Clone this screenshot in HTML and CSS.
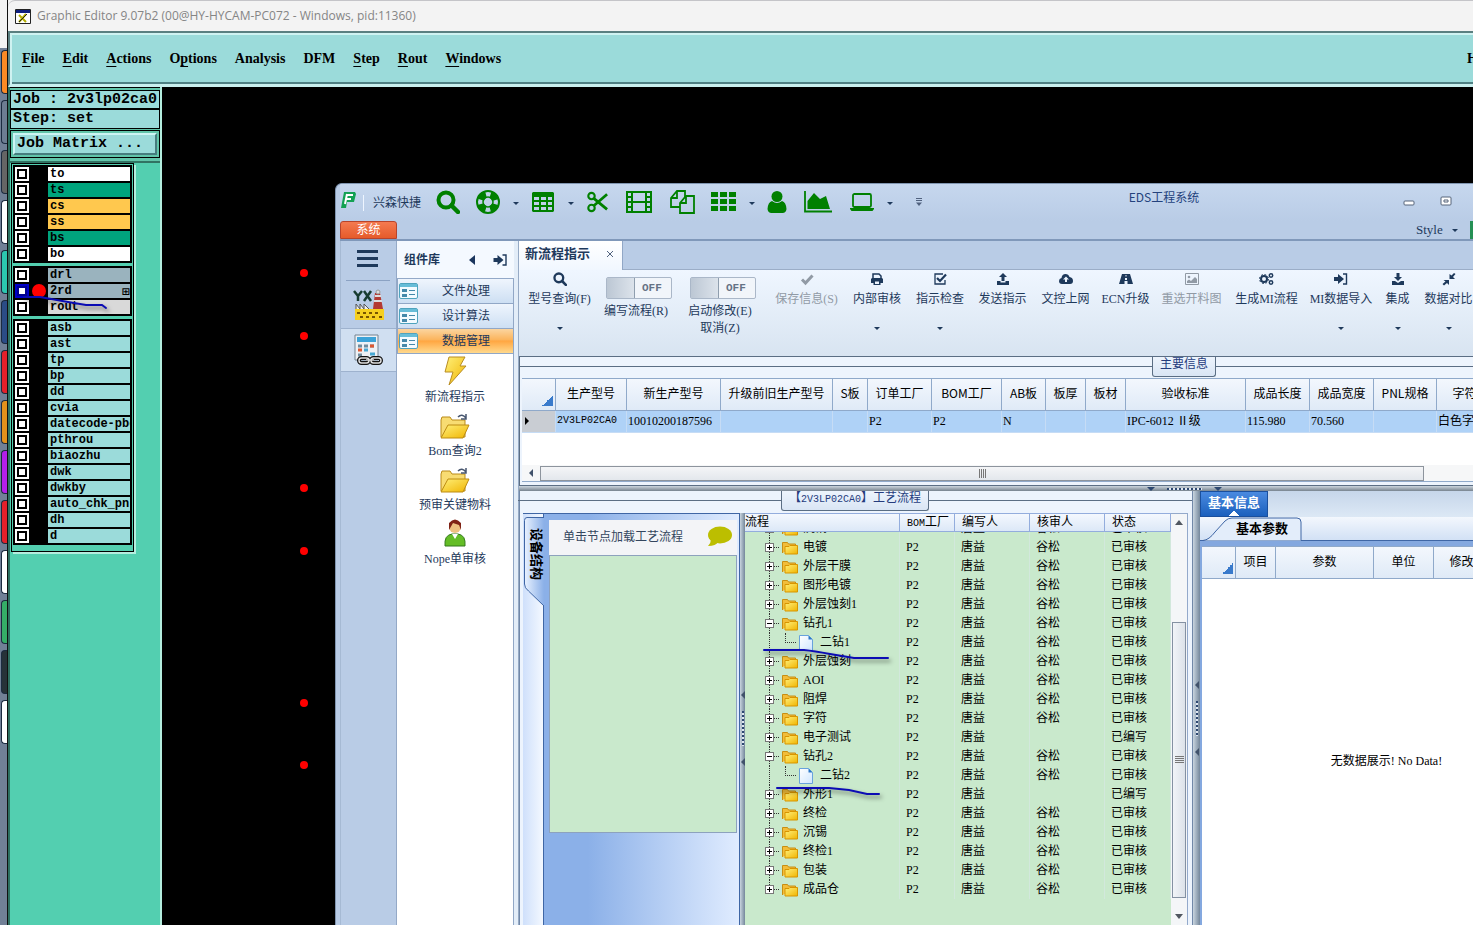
FILE: index.html
```html
<!DOCTYPE html>
<html lang="zh-CN">
<head>
   <meta charset="UTF-8">
   <meta name="viewport" content="width=device-width, initial-scale=1.0">
   <title>Graphic Editor</title>
   <link rel="stylesheet" href="styles.css">
</head>
<body>
   <!-- shared icons -->
   <svg class="defs" aria-hidden="true">
      <defs>
         <linearGradient id="gold" x1="0" y1="0" x2="1" y2="1"><stop offset="0" stop-color="#fff07a"/><stop offset="1" stop-color="#f0b400"/></linearGradient>
         <linearGradient id="page" x1="0" y1="0" x2="1" y2="1"><stop offset="0" stop-color="#fff"/><stop offset="1" stop-color="#cfe6ff"/></linearGradient>
         <linearGradient id="sidetab" x1="0" y1="0" x2="1" y2="0"><stop offset="0" stop-color="#e9f2ff"/><stop offset="1" stop-color="#8bb0e8"/></linearGradient>
      </defs>
      <symbol id="i-search" viewBox="0 0 24 24"><circle cx="10" cy="10" r="7.5" fill="none" stroke="currentColor" stroke-width="4"/><path d="M15.500 15.500L22 22" stroke="currentColor" stroke-width="4.500" stroke-linecap="round"/></symbol>
      <symbol id="i-ring" viewBox="0 0 24 24"><circle cx="12" cy="12" r="7.800" fill="none" stroke="currentColor" stroke-width="7" stroke-dasharray="7.600 4.650" stroke-dashoffset="-2.300"/><circle cx="12" cy="12" r="11" fill="none" stroke="currentColor" stroke-width="2"/><circle cx="12" cy="12" r="5" fill="none" stroke="currentColor" stroke-width="1.500"/></symbol>
      <symbol id="i-table" viewBox="0 0 24 24"><path fill="currentColor" fill-rule="evenodd" d="M2 2h20l1 1v18l-1 1H2l-1-1V3zM3 7v3h5V7zM10 7v3h5V7zM17 7v3h4V7zM3 12v3h5v-3zM10 12v3h5v-3zM17 12v3h4v-3zM3 17v3h5v-3zM10 17v3h5v-3zM17 17v3h4v-3z"/></symbol>
      <symbol id="i-cut" viewBox="0 0 24 24"><g fill="none" stroke="currentColor" stroke-width="2.300"><circle cx="6" cy="5.500" r="3.500"/><circle cx="6" cy="18.500" r="3.500"/><path d="M8.500 8L23 20M8.500 16L23 3.500" stroke-width="3"/></g></symbol>
      <symbol id="i-film" viewBox="0 0 26 24"><path fill="currentColor" fill-rule="evenodd" d="M0 1h26v22H0zM2 3v3h3V3zM2 8v3h3V8zM2 13v3h3v-3zM2 18v3h3v-3zM21 3v3h3V3zM21 8v3h3V8zM21 13v3h3v-3zM21 18v3h3v-3zM7 3v8h12V3zM7 13v8h12v-8z"/></symbol>
      <symbol id="i-copy" viewBox="0 0 25 24"><g fill="none" stroke="currentColor" stroke-width="1.800"><path d="M10 17H1V8l6-7h8v6M7 1v7H1"/><path d="M10 23V13l6-7h8v17zM16 6v7h-6"/></g></symbol>
      <symbol id="i-grid" viewBox="0 0 25 20"><path fill="currentColor" d="M0 0h7v5H0zM9 0h7v5H9zM18 0h7v5h-7zM0 7h7v5H0zM9 7h7v5H9zM18 7h7v5h-7zM0 14h7v5H0zM9 14h7v5H9zM18 14h7v5h-7z"/></symbol>
      <symbol id="i-user" viewBox="0 0 20 22"><circle cx="10" cy="5.500" r="5.500" fill="currentColor"/><path fill="currentColor" d="M5 10q5 4 10 0 4 1 4.500 8-.5 4-4 4h-11q-3.500 0-4-4Q1 11 5 10z"/></symbol>
      <symbol id="i-chart" viewBox="0 0 28 22"><path d="M1 0v20.500h27" fill="none" stroke="currentColor" stroke-width="1.800"/><path fill="currentColor" d="M3.500 18V10L10 2l6 6 6-3 4 13z"/></symbol>
      <symbol id="i-laptop" viewBox="0 0 24 18"><rect x="3" y="1" width="18" height="13" rx="1.500" fill="none" stroke="currentColor" stroke-width="1.800"/><path fill="currentColor" d="M0 15h24v1l-1.500 2h-21L0 16z"/></symbol>
      <symbol id="i-check" viewBox="0 0 14 14"><path d="M2 7.500l3.500 3.500L12.500 3.500" fill="none" stroke="currentColor" stroke-width="3"/></symbol>
      <symbol id="i-print" viewBox="0 0 14 14"><path d="M3 6V2h6l2 2v2" fill="none" stroke="currentColor" stroke-width="1.500"/><path fill="currentColor" fill-rule="evenodd" d="M2 6h10l1 1v4h-2.500v2h-7v-2H1V7zM5 9.500V12h4V9.500z"/></symbol>
      <symbol id="i-tick" viewBox="0 0 14 14"><path d="M12 8v4H2V2h8" fill="none" stroke="currentColor" stroke-width="1.300"/><path d="M4 6l3 3 6-6.500" fill="none" stroke="currentColor" stroke-width="2.200"/></symbol>
      <symbol id="i-up" viewBox="0 0 14 14"><path fill="currentColor" d="M7 1l4 4H8.500v4h-3V5H3zM1 9h3.500v1.500h5V9H13v4H1z"/></symbol>
      <symbol id="i-down" viewBox="0 0 14 14"><path fill="currentColor" d="M5.500 1h3v4H11L7 9 3 5h2.500zM1 9h3l3 2 3-2h3v4H1z"/></symbol>
      <symbol id="i-cloud" viewBox="0 0 16 14"><path fill="currentColor" fill-rule="evenodd" d="M4 12Q1 12 1 9q0-2.500 2.500-3Q4 2 7.500 2q3 0 4 3Q15 5.500 15 9q0 3-3 3zM8 4.500L5 7.500h2V10h2V7.500h2z"/></symbol>
      <symbol id="i-road" viewBox="0 0 14 14"><path fill="currentColor" fill-rule="evenodd" d="M3 2h8l3 10H8.500V9h-3v3H0zM6.500 3v1.500h1V3zM6 6v2h2V6z"/></symbol>
      <symbol id="i-image" viewBox="0 0 14 12"><path fill="none" stroke="currentColor" d="M.5.5h13v11H.5z"/><circle cx="4" cy="4" r="1.300" fill="currentColor"/><path fill="currentColor" d="M2 10V8l2-1.500L6 8l4-4 2 2v4z"/></symbol>
      <symbol id="i-gears" viewBox="0 0 15 14"><circle cx="5" cy="7" r="3" fill="none" stroke="currentColor" stroke-width="2"/><circle cx="5" cy="7" r="4.500" fill="none" stroke="currentColor" stroke-dasharray="1.800 1.730"/><g fill="none" stroke="currentColor" stroke-width="1.500"><circle cx="12" cy="3.500" r="1.700"/><circle cx="12" cy="10.500" r="1.700"/></g></symbol>
      <symbol id="i-enter" viewBox="0 0 14 14"><path fill="currentColor" d="M0 5h4V2l6 5-6 5V9H0z"/><path d="M9 2h3.500v10H9" fill="none" stroke="currentColor" stroke-width="1.400"/></symbol>
      <symbol id="i-compress" viewBox="0 0 14 14"><path fill="currentColor" d="M7.500 2v5H13l-2-2 2.500-3L12 1 9.500 3.500zM1.500 8H7v5L5 11l-3 2.500L.5 12 3.500 9.500z"/></symbol>
      <symbol id="i-form" viewBox="0 0 20 16"><rect x=".5" y=".5" width="18" height="15" rx="1.500" fill="#f3fbff" stroke="#4fa3bd"/><path fill="#67bdd8" d="M1 1h17v3H1z"/><path fill="#4589aa" d="M3 6h5v3H3zM3 11h5v3H3zM10 7h6v1h-6zM10 11h6v1h-6z"/></symbol>
      <symbol id="i-folder" viewBox="0 0 30 26"><path d="M1 6l1-3h8l2 3h13v17H1z" fill="#f8dc72" stroke="#b98a18"/><path d="M1 24L8 11h21l-6 13z" fill="url(#gold)" stroke="#bd8c12"/><path d="M18 3q4-4 8 1m0-4v5h-5" fill="none" stroke="#47566f" stroke-width="1.500"/></symbol>
      <symbol id="i-dir" viewBox="0 0 16 14"><path d="M.5 12V1.500h5l1 1.500h7v3" fill="#f2bd3a" stroke="#c88e12"/><path d="M3 13V5.500h4L8 4.500h7.500V13z" fill="url(#gold)" stroke="#d89500"/></symbol>
      <symbol id="i-page" viewBox="0 0 14 16"><path d="M.5.500h9l4 4v11H.5z" fill="url(#page)" stroke="#68a2dc"/><path d="M9.500.500v4h4z" fill="#2d78c8"/></symbol>
   </svg>

   <div class="desktop">
      <aside class="dock">
         <i class="dock-orange"></i><i class="dock-slate"></i><i class="dock-stone"></i><i class="dock-white"></i><i class="dock-teal"></i><i class="dock-navy"></i><i class="dock-red"></i><i class="dock-amber"></i><i class="dock-purple"></i><i class="dock-red"></i><i class="dock-white"></i><i class="dock-green"></i><i class="dock-dark"></i><i class="dock-white"></i>
      </aside>

      <div class="editor">
         <header class="editor-title">
            <svg width="16" height="15" viewBox="0 0 16 15"><path fill="#fff" stroke="#222" d="M.5.500h15v14H.5z"/><path fill="#102080" d="M1 1h14v3H1z"/><path d="M4 6l7 7M11 5l-7 8" stroke="#b3ad00" stroke-width="2"/><path d="M4 13l8-8" stroke="#222"/></svg>
            <span>Graphic Editor 9.07b2 (00@HY-HYCAM-PC072 - Windows, pid:11360)</span>
         </header>
         <nav class="menubar">
            <a href="#"><u>F</u>ile</a>
            <a href="#"><u>E</u>dit</a>
            <a href="#"><u>A</u>ctions</a>
            <a href="#">O<u>p</u>tions</a>
            <a href="#">Analysis</a>
            <a href="#">DFM</a>
            <a href="#"><u>S</u>tep</a>
            <a href="#"><u>R</u>out</a>
            <a href="#"><u>W</u>indows</a>
            <a href="#" class="help">H</a>
         </nav>

         <div class="workspace">
            <section class="job">
               <div class="job-head">
                  <div class="job-line">Job : 2v3lp02ca0</div>
                  <div class="job-line">Step: set</div>
                  <div class="job-matrix"><button type="button">Job Matrix ...</button></div>
               </div>
               <div class="layers" id="layers"></div>
            </section>

            <main class="canvas">
               <svg class="pads" width="12" height="600"><g fill="#f00"><circle cx="6" cy="86" r="4"/><circle cx="6" cy="149" r="4"/><circle cx="6" cy="301" r="4"/><circle cx="6" cy="364" r="4"/><circle cx="6" cy="516" r="4"/><circle cx="6" cy="578" r="4"/></g></svg>

               <div class="eds">
                  <header class="eds-bar">
                     <svg class="eds-logo" width="17" height="18" viewBox="0 0 17 18"><path d="M4 1h11l1 2-2 8H7l-1 6H1z" fill="#13a153"/><path d="M7 4h6M6 8h5M7 3L5 13" stroke="#fff" stroke-width="2"/></svg>
                     <span class="eds-name">兴森快捷</span>
                     <div class="quick">
                        <button type="button" aria-label="search"><svg width="24" height="24"><use href="#i-search"/></svg></button>
                        <button type="button" class="drop" aria-label="help"><svg width="24" height="24"><use href="#i-ring"/></svg></button>
                        <button type="button" class="drop" aria-label="table"><svg width="24" height="24"><use href="#i-table"/></svg></button>
                        <button type="button" aria-label="cut"><svg width="22" height="22"><use href="#i-cut"/></svg></button>
                        <button type="button" aria-label="film"><svg width="26" height="24"><use href="#i-film"/></svg></button>
                        <button type="button" aria-label="copy"><svg width="25" height="24"><use href="#i-copy"/></svg></button>
                        <button type="button" class="drop" aria-label="grid"><svg width="25" height="20"><use href="#i-grid"/></svg></button>
                        <button type="button" aria-label="user"><svg width="20" height="22"><use href="#i-user"/></svg></button>
                        <button type="button" aria-label="chart"><svg width="28" height="22"><use href="#i-chart"/></svg></button>
                        <button type="button" class="drop" aria-label="laptop"><svg width="24" height="18"><use href="#i-laptop"/></svg></button>
                        <button type="button" aria-label="more"><svg width="8" height="8"><path d="M1 .5h6M1 2.500h6" stroke="#50617e"/><path d="M1 4.500h6L4 8z" fill="#50617e"/></svg></button>
                     </div>
                     <h1>EDS工程系统</h1>
                     <div class="win">
                        <button type="button" aria-label="minimize"><svg width="12" height="12"><rect x="1" y="5" width="10" height="4" rx="1" fill="#fff" stroke="#56647a"/></svg></button>
                        <button type="button" aria-label="restore"><svg width="12" height="12"><rect x="1" y="1" width="10" height="8" rx="1" fill="#fff" stroke="#56647a"/><path d="M4 4h4v2H4z" fill="none" stroke="#56647a"/></svg></button>
                     </div>
                  </header>
                  <div class="eds-tabs">
                     <button type="button" class="sys-tab">系统</button>
                     <button type="button" class="style-btn">Style <i class="caret"></i></button>
                     <i class="style-mark"></i>
                  </div>

                  <div class="eds-body">
                     <nav class="rail">
                        <button type="button" class="rail-menu" aria-label="menu"><i></i><i></i><i></i></button>
                        <button type="button" class="rail-item" aria-label="YX">
                           <svg width="32" height="32" viewBox="0 0 32 32"><path d="M1 2l4 5v5M9 2L5 7M11 2l7 10M18 2l-7 10" fill="none" stroke="#173c30" stroke-width="2.500"/><path d="M22 4h5l3 16H20z" fill="#b33a32"/><path d="M22 7h6M21 12h8" stroke="#ddd" stroke-width="2"/><circle cx="25" cy="3" r="2" fill="#ddd" stroke="#999"/><path d="M3 20v-5l4 5v-5l4 5v-5l5 5" fill="#eee" stroke="#555"/><path d="M2 20h29v11H2z" fill="#f5cf20"/><path d="M4 24h3M10 24h3M16 24h3M22 24h3M7 28h3M13 28h3M19 28h3M26 28h3" stroke="#775500" stroke-width="2"/></svg>
                        </button>
                        <button type="button" class="rail-item rail-light" aria-label="calculator">
                           <svg width="32" height="32" viewBox="0 0 32 32"><path d="M2 1h23v25H2z" fill="#eef1f5" stroke="#738291"/><path d="M4 3h19v5H4z" fill="#3ca3d8"/><path d="M5 12h4M11 12h4M17 12h4M5 21h4" stroke="#6e8c9e" stroke-width="3"/><path d="M5 16h4M17 12h4" stroke="#df5831" stroke-width="3"/><path d="M11 16h4M17 20h5" stroke="#47a8d3" stroke-width="3"/><g fill="none" stroke="#111" stroke-width="4"><rect x="6" y="24" width="10" height="5" rx="2.500"/><rect x="18" y="24" width="10" height="5" rx="2.500"/><path d="M13 26h8"/></g><g fill="none" stroke="#ddd" stroke-width="1.500"><rect x="6" y="24" width="10" height="5" rx="2.500"/><rect x="18" y="24" width="10" height="5" rx="2.500"/><path d="M13 26h8"/></g></svg>
                        </button>
                     </nav>

                     <aside class="parts">
                        <div class="parts-head"><b>组件库</b><svg width="6" height="10"><path d="M6 0v10L0 5z" fill="#1b365e"/></svg><svg width="15" height="14"><use href="#i-enter"/></svg></div>
                        <button type="button" class="cat"><svg width="20" height="16"><use href="#i-form"/></svg><span>文件处理</span></button>
                        <button type="button" class="cat"><svg width="20" height="16"><use href="#i-form"/></svg><span>设计算法</span></button>
                        <button type="button" class="cat on"><svg width="20" height="16"><use href="#i-form"/></svg><span>数据管理</span></button>
                        <div class="parts-list">
                           <a href="#"><svg width="30" height="30" viewBox="0 0 30 30"><path d="M9 1h16l-5 9h6L9 29l4-13H5z" fill="url(#gold)" stroke="#b88d24"/></svg>新流程指示</a>
                           <a href="#"><svg width="30" height="26"><use href="#i-folder"/></svg>Bom查询2</a>
                           <a href="#"><svg width="30" height="26"><use href="#i-folder"/></svg>预审关键物料</a>
                           <a href="#"><svg width="24" height="30" viewBox="0 0 24 30"><path d="M2 28q-1-11 7-12h6q8 1 7 12z" fill="#64bd26" stroke="#33791b"/><path d="M9 16h6l-3 5z" fill="#fff"/><circle cx="12" cy="9" r="6" fill="#edc080"/><path d="M6 12V5q6-7 12 0v7l-2-5-6-2z" fill="#7f2215"/></svg>Nope单审核</a>
                        </div>
                     </aside>

                     <section class="main">
                        <div class="doc-tabs"><div class="doc-tab"><b>新流程指示</b><button type="button" aria-label="close"><svg width="8" height="8"><path d="M1 1l6 6M7 1L1 7" stroke="#50617e"/></svg></button></div></div>
                        <div class="ribbon">
                           <button type="button" class="more"><svg width="14" height="14"><use href="#i-search"/></svg><span>型号查询(F)</span></button>
                           <label class="toggle"><span class="sw"><input type="checkbox"><b>OFF</b></span><span>编写流程(R)</span></label>
                           <label class="toggle"><span class="sw"><input type="checkbox"><b>OFF</b></span><span>启动修改(E)<br>取消(Z)</span></label>
                           <button type="button" disabled><svg width="14" height="14"><use href="#i-check"/></svg><span>保存信息(S)</span></button>
                           <button type="button" class="more"><svg width="14" height="14"><use href="#i-print"/></svg><span>内部审核</span></button>
                           <button type="button" class="more"><svg width="14" height="14"><use href="#i-tick"/></svg><span>指示检查</span></button>
                           <button type="button"><svg width="14" height="14"><use href="#i-up"/></svg><span>发送指示</span></button>
                           <button type="button"><svg width="16" height="14"><use href="#i-cloud"/></svg><span>文控上网</span></button>
                           <button type="button"><svg width="14" height="14"><use href="#i-road"/></svg><span>ECN升级</span></button>
                           <button type="button" disabled><svg width="14" height="14"><use href="#i-image"/></svg><span>重选开料图</span></button>
                           <button type="button"><svg width="15" height="14"><use href="#i-gears"/></svg><span>生成MI流程</span></button>
                           <button type="button" class="more"><svg width="14" height="14"><use href="#i-enter"/></svg><span>MI数据导入</span></button>
                           <button type="button" class="more"><svg width="14" height="14"><use href="#i-down"/></svg><span>集成</span></button>
                           <button type="button" class="more"><svg width="14" height="14"><use href="#i-compress"/></svg><span>数据对比</span></button>
                        </div>

                        <section class="info">
                           <div class="group-line"><h2>主要信息</h2></div>
                           <div class="info-table">
                              <table>
                                 <colgroup><col class="w34"><col class="w71"><col class="w94"><col class="w112"><col class="w35"><col class="w64"><col class="w70"><col class="w44"><col class="w40"><col class="w40"><col class="w120"><col class="w64"><col class="w64"><col class="w63"><col class="w80"></colgroup>
                                 <thead><tr><th class="corner"></th><th>生产型号</th><th>新生产型号</th><th>升级前旧生产型号</th><th>S板</th><th>订单工厂</th><th>BOM工厂</th><th>AB板</th><th>板厚</th><th>板材</th><th>验收标准</th><th>成品长度</th><th>成品宽度</th><th>PNL规格</th><th>字符颜色</th></tr></thead>
                                 <tbody><tr><td class="mark"></td><td class="code">2V3LP02CA0</td><td>10010200187596</td><td></td><td></td><td>P2</td><td>P2</td><td>N</td><td></td><td></td><td>IPC-6012 Ⅱ级</td><td>115.980</td><td>70.560</td><td></td><td>白色字符</td></tr></tbody>
                              </table>
                           </div>
                           <div class="hscroll"><i class="tri-left"></i><div class="hthumb"><i></i><i></i><i></i><i></i></div></div>
                        </section>
                        <div class="hsplit"><i class="tri-down"></i><i class="dots"></i><i class="tri-down"></i></div>

                        <div class="lower">
                           <section class="flow">
                              <div class="group-line"><h2>【<span class="code">2V3LP02CA0</span>】工艺流程</h2></div>
                              <div class="flow-body">
                                 <div class="device">
                                    <button type="button" class="side-tab"><svg width="20" height="90"><path d="M20 .5H3q-2.500 0-2.500 3V67q0 4 4 7L20 89" fill="url(#sidetab)" stroke="#3f66a5"/></svg><span>设备结构</span></button>
                                    <div class="device-body">
                                       <div class="device-head"><span>单击节点加载工艺流程</span><svg width="26" height="22" viewBox="0 0 26 22"><ellipse cx="14" cy="9" rx="12" ry="8.500" fill="#bcbe00"/><path d="M5 13q0 4-3 7 8 0 10-4z" fill="#bcbe00"/></svg></div>
                                       <div class="device-area"></div>
                                    </div>
                                 </div>
                                 <div class="vsplit"><i class="tri-left"></i><i class="vdots"></i><i class="tri-left"></i></div>
                                 <div class="tree">
                                    <div class="tree-view">
                                       <div class="tree-head"><span>流程</span><span><small class="code">BOM</small>工厂</span><span>编写人</span><span>核审人</span><span>状态</span></div>
                                       <div class="tree-clip"><table><colgroup><col class="w155"><col class="w55"><col class="w75"><col class="w75"><col></colgroup><tbody id="tree"></tbody></table></div>
                                    </div>
                                    <div class="vscroll"><i class="tri-up"></i><div class="vtrack-top"></div><div class="vthumb"><i></i><i></i><i></i><i></i></div><i class="tri-dn"></i></div>
                                    <svg class="pen pen-a" width="132" height="20"><path d="M2 5h40q10 1 26 4l24 4h34"/></svg>
                                    <svg class="pen pen-b" width="112" height="20"><path d="M2 5h52l20 2 18 4h12"/></svg>
                                 </div>
                              </div>
                           </section>
                           <div class="vsplit wide"><i class="tri-left"></i><i class="vdots"></i><i class="tri-left"></i></div>
                           <section class="detail">
                              <div class="detail-tabs"><button type="button">基本信息</button></div>
                              <div class="sub-tabs"><svg width="100" height="24"><path d="M0 23.500Q6 23 12 15L22 4q3-3 7-3h65q4 0 4 4v18.500" fill="#e3edfa" stroke="#3f66a5"/></svg><b>基本参数</b></div>
                              <div class="params"><table><colgroup><col class="w34"><col class="w40"><col class="w98"><col class="w60"><col class="w80"></colgroup><thead><tr><th class="corner"></th><th>项目</th><th>参数</th><th>单位</th><th>修改前值</th></tr></thead></table><p>无数据展示! No Data!</p></div>
                           </section>
                        </div>
                     </section>
                  </div>
               </div>
            </main>
         </div>
      </div>
   </div>

   <script>
      // layer list
      const groups = [
         [['to', 'white'], ['ts', 'green'], ['cs', 'gold'], ['ss', 'gold'], ['bs', 'green'], ['bo', 'white']],
         [['drl', 'steel'], ['2rd', 'steel'], ['rout', 'silver']],
         ['asb', 'ast', 'tp', 'bp', 'dd', 'cvia', 'datecode-pbc', 'pthrou', 'biaozhu', 'dwk', 'dwkby', 'auto_chk_pnl', 'dh', 'd'].map(n => [n, 'aqua'])
      ];
      let html = '';
      for (const g of groups) {
         html += '<div class="layer-group">';
         for (const [name, color] of g) {
            const on = name == '2rd';
            html += '<label class="layer' + (on ? ' active' : '') + '"><input type="checkbox"><i class="lamp"></i><span class="' + color + '">' + name + (on ? '<em>⊞</em>' : '') + '</span></label>';
         }
         html += '</div>';
      }
      html += '<svg class="pen pen-c" width="90" height="24"><path d="M2 5h16l28 5 18 3h16l4 3"/></svg>';
      document.getElementById('layers').innerHTML = html;

      // process tree: sign, name, checked
      const rows = [
         ['+', '沉铜', 1], ['+', '电镀', 1], ['+', '外层干膜', 1], ['+', '图形电镀', 1], ['+', '外层蚀刻1', 1],
         ['-', '钻孔1', 1], ['', '二钻1', 1], ['+', '外层蚀刻', 1], ['+', 'AOI', 1], ['+', '阻焊', 1],
         ['+', '字符', 1], ['+', '电子测试', 0], ['-', '钻孔2', 1], ['', '二钻2', 1], ['+', '外形1', 0],
         ['+', '终检', 1], ['+', '沉锡', 1], ['+', '终检1', 1], ['+', '包装', 1], ['+', '成品仓', 1]
      ];
      document.getElementById('tree').innerHTML = rows.map(([sign, name, done], i) => {
         const end = i == rows.length - 1 ? ' last' : '';
         const state = name == '电子测试' || name == '外形1' ? '已编写' : '已审核';
         const node = sign
            ? '<button type="button" class="' + (sign == '+' ? 'plus' : 'minus') + '" aria-label="' + sign + '"></button><i class="dash"></i><svg width="16" height="14"><use href="#i-dir"/></svg>'
            : '<i class="elbow"></i><svg width="14" height="16"><use href="#i-page"/></svg>';
         return '<tr><td><div class="node' + end + '">' + node + '<span>' + name + '</span></div></td><td>P2</td><td>唐益</td><td>' + (done ? '谷松' : '') + '</td><td>' + state + '</td></tr>';
      }).join('');
   </script>
</body>
</html>
```
FILE: styles.css
```css
* {
   box-sizing: border-box;
}

body {
   margin: 0;
   overflow: hidden;
   background: #000;
   font-family: "Liberation Serif", "Noto Sans CJK SC", serif;
   font-size: 12px;
   line-height: 16px;
   color: #000;
}

button {
   border: 0;
   padding: 0;
   background: none;
   font: inherit;
   color: inherit;
}

a {
   color: inherit;
   text-decoration: none;
}

svg {
   display: block;
   flex: none;
}

i, em {
   font-style: normal;
}

.defs {
   position: absolute;
   width: 0;
   height: 0;
}

.desktop {
   display: flex;
   height: 100vh;
}

/* strip of the dock behind the editor */
.dock {
   flex: none;
   width: 8px;
   padding: 50px 0 0 1px;
   display: flex;
   flex-direction: column;
   gap: 6px;
   background: linear-gradient(#f3f3f3 48px, #718096 48px);
   border-right: 1px solid #111;
}

.dock i {
   flex: none;
   height: 44px;
   border: 1px solid #1c2b40;
   border-right: 0;
   border-radius: 4px 0 0 4px;
}

.dock-orange { background: #fb8a25; }
.dock-slate { background: #6d7d92; }
.dock-stone { background: #656565; }
.dock-white { background: #fff; }
.dock-teal { background: #2cc7b0; }
.dock-navy { background: #2b4c86; }
.dock-red { background: #e5202a; }
.dock-amber { background: #e3911b; }
.dock-purple { background: #b51eea; }
.dock-green { background: #35ad67; }
.dock-dark { background: #263238; }

/* graphic editor */
.editor {
   flex: 1;
   min-width: 0;
   display: flex;
   flex-direction: column;
   background: linear-gradient(#f3f3f3, #f3f3f3) 0 0 / 10px 10px no-repeat;
}

.editor-title {
   flex: none;
   height: 31px;
   padding-left: 7px;
   display: flex;
   align-items: center;
   gap: 6px;
   background: #f3f3f3;
   border-top: 1px solid #c4c4c8;
   border-radius: 7px 0 0 0;
   font-family: "Open Sans", sans-serif;
   font-size: 12px;
   color: #858585;
   white-space: nowrap;
}

.menubar {
   flex: none;
   height: 56px;
   padding: 0 0 0 12px;
   display: flex;
   align-items: center;
   gap: 18px;
   overflow: hidden;
   background: #9bdbda;
   border: 2px solid #5a7f80;
   border-right: 0;
   border-bottom: 3px solid #c9efee;
   box-shadow: inset 2px 2px #cff2f1, inset 0 -2px #4f8083;
   font-size: 14px;
   font-weight: bold;
}

.menubar u {
   text-underline-offset: 3px;
}

.help {
   margin-left: auto;
   margin-right: -5px;
}

.workspace {
   flex: 1;
   min-height: 0;
   display: flex;
}

.job {
   flex: none;
   width: 154px;
   background: #53cfb0;
   border-left: 2px solid #2c7060;
   border-right: 2px solid #b4eedf;
   font-family: "Liberation Mono", monospace;
   font-weight: bold;
}

.job-head {
   padding: 2px 0 3px;
   border-top: 1px solid #000;
   border-bottom: 2px solid #317363;
   background: #62c5aa;
}

.job-line {
   height: 19px;
   padding-left: 2px;
   border: 1px solid #000;
   background: #9bdbda;
   font-size: 15px;
   line-height: 18px;
   white-space: nowrap;
}

.job-line + .job-line {
   height: 20px;
}

.job-matrix {
   margin-top: 1px;
   padding: 2px;
   height: 28px;
   border: 1px solid #000;
}

.job-matrix button {
   width: 100%;
   height: 22px;
   padding-left: 2px;
   text-align: left;
   font-size: 15px;
   line-height: 18px;
   background: #9bdbda;
   border: 2px solid;
   border-color: #cdf5f3 #477d7e #477d7e #cdf5f3;
}

.layers {
   position: relative;
   width: 123px;
   margin-left: 1px;
   padding: 2px 2px 7px 2px;
   border: 1px solid #000;
   box-shadow: 2px 2px #b4eedf;
   display: flex;
   flex-direction: column;
   gap: 5px;
   background: #53cfb0;
}

.layer-group {
   width: 117px;
   background: #000;
   outline: 1px solid #000;
}

.layer {
   height: 16px;
   padding: 1px;
   display: flex;
   align-items: center;
   font-size: 12px;
   line-height: 15px;
   white-space: nowrap;
}

.layer input {
   appearance: none;
   flex: none;
   width: 14px;
   height: 14px;
   margin: 0;
   background: #fff;
   border: 2px solid #fff;
   box-shadow: inset 0 0 0 2px #000;
}

.layer.active input {
   background: #fff;
   border-color: #0000c8;
   box-shadow: inset 0 0 0 2px #000090;
}

.lamp {
   flex: none;
   width: 14px;
   height: 14px;
   margin: 0 2px 0 3px;
   border-radius: 50%;
}

.active .lamp {
   background: #f00;
}

.layer span {
   flex: 1;
   min-width: 0;
   height: 14px;
   padding-left: 2px;
   overflow: hidden;
   display: flex;
   justify-content: space-between;
}

.layer em {
   font-size: 10px;
   font-family: "DejaVu Sans", sans-serif;
}

.white { background: #fff; }
.green { background: #00a47d; }
.gold { background: #ffc84e; }
.steel { background: #9ab3be; }
.silver { background: #d9d9d9; }
.aqua { background: #9bdbda; }

/* hand drawn marks */
.pen {
   position: absolute;
   fill: none;
   stroke: #0c0cb4;
   stroke-width: 2;
   stroke-linecap: round;
   filter: drop-shadow(2px 3px 2px rgba(0, 0, 0, .5));
}

.pen-a { left: 17px; top: 132px; }
.pen-b { left: 30px; top: 270px; }
.pen-c { left: 10px; top: 128px; }

.canvas {
   position: relative;
   flex: 1;
   min-width: 0;
   background: #000;
}

.pads {
   position: absolute;
   left: 136px;
   top: 100px;
   margin-top: -100px;
   padding-top: 100px;
   overflow: visible;
}

/* EDS window lies over the canvas */
.eds {
   position: absolute;
   left: 173px;
   top: 96px;
   right: 0;
   bottom: 0;
   display: flex;
   flex-direction: column;
   overflow: hidden;
   background: #b9cce6;
   border: 1px solid #8095b0;
   border-width: 1px 0 0 1px;
   border-radius: 7px 0 0 0;
   padding-left: 4px;
   color: #1e395b;
}

.eds-bar {
   flex: none;
   height: 37px;
   display: flex;
   align-items: center;
   background: linear-gradient(#c6d7ee, #b9cce6);
   white-space: nowrap;
}

.eds-logo {
   margin-bottom: 6px;
}

.eds-name {
   width: 73px;
   margin-left: 6px;
   padding-left: 9px;
   border-left: 1px solid #eef5ff;
}

.quick {
   display: grid;
   grid-template-columns: 40px 55px 55px 40px 44px 41px 56px 37px 46px 65px 10px;
   align-items: center;
   padding-bottom: 2px;
   color: #008000;
}

.quick button {
   display: flex;
   align-items: center;
}

.drop::after,
.caret {
   content: "";
   display: inline-block;
   margin-left: 13px;
   border: 3px solid transparent;
   border-top-color: #1e395b;
   border-bottom: 0;
}

.drop::after {
   margin-top: 4px;
}

.eds-bar h1 {
   margin: 0 auto;
   padding-bottom: 12px;
   font: 12px/16px "Noto Sans CJK SC", sans-serif;
   color: #24427c;
}

.win {
   width: 70px;
   display: flex;
   gap: 25px;
   padding-bottom: 2px;
}

.eds-tabs {
   flex: none;
   height: 20px;
   display: flex;
   align-items: stretch;
   border-bottom: 2px solid #8098ba;
}

.sys-tab {
   width: 57px;
   color: #fff;
   background: linear-gradient(#f47a50, #e65b2a);
   border: 1px solid #b8442b;
   border-radius: 3px 3px 0 0;
}

.style-btn {
   margin-left: auto;
   font-size: 13px;
}

.style-btn .caret {
   margin: 0 0 2px 6px;
}

.style-mark {
   width: 3px;
   margin-left: 12px;
   background: #259055;
}

.eds-body {
   flex: 1;
   min-height: 0;
   display: flex;
}

.rail {
   flex: none;
   width: 57px;
   border-left: 1px solid #a6bad4;
   border-right: 1px solid #94a9c7;
}

.rail-menu {
   width: 44px;
   height: 40px;
   margin: 0 5px;
   padding: 9px 11px 13px;
   display: flex;
   flex-direction: column;
   justify-content: space-between;
   border-bottom: 1px solid #8ba2c3;
}

.rail-menu i {
   width: 21px;
   height: 3px;
   background: #1e395b;
}

.rail-item {
   width: 100%;
   height: 47px;
   display: flex;
   align-items: center;
   justify-content: center;
}

.rail-light {
   height: 44px;
   border: 1px solid #9eb2ce;
   border-width: 1px 0;
   background: #d0dff1;
}

.parts {
   flex: none;
   width: 122px;
   display: flex;
   flex-direction: column;
   background: #e3edf8;
   border-right: 1px solid #96aac5;
   padding-right: 4px;
}

.parts-head {
   height: 38px;
   padding-left: 7px;
   display: flex;
   align-items: center;
   background: #f4f9ff;
   border-bottom: 1px solid #93a9c8;
}

.parts-head b {
   margin-right: 29px;
}

.parts-head svg + svg {
   margin-left: 18px;
}

.cat {
   height: 25px;
   padding-left: 1px;
   display: flex;
   align-items: center;
   background: linear-gradient(#eff5fd, #cddff3);
   border: 1px solid #91a7c6;
   border-top: 0;
}

.cat span {
   flex: 1;
}

.cat.on {
   background: linear-gradient(#fbd5a0, #fbb45c 45%, #ffa641 50%, #ffd98d);
}

.parts-list {
   flex: 1;
   background: #fff;
   border-right: 1px solid #91a7c6;
}

.parts-list a {
   height: 54px;
   display: flex;
   flex-direction: column;
   align-items: center;
   justify-content: flex-end;
   gap: 3px;
   padding-bottom: 3px;
}

.main {
   flex: 1;
   min-width: 0;
   display: flex;
   flex-direction: column;
}

.doc-tabs {
   flex: none;
   height: 29px;
   border-bottom: 1px solid #9badc7;
}

.doc-tab {
   width: 104px;
   height: 29px;
   padding: 0 8px 3px 6px;
   display: flex;
   align-items: center;
   justify-content: space-between;
   background: linear-gradient(#fff, #f1f7ff);
   border-right: 1px solid #91a7c6;
   font-size: 13px;
}

.ribbon {
   flex: none;
   height: 86px;
   padding-top: 2px;
   display: grid;
   grid-template-columns: 81px 72px 96px 77px 64px 62px 63px 63px 57px 75px 75px 74px 39px 63px;
   overflow: hidden;
   background: linear-gradient(#eff6ff, #d8e4f1);
   white-space: nowrap;
   text-align: center;
}

.ribbon button {
   display: flex;
   flex-direction: column;
   align-items: center;
   gap: 5px;
   height: 58px;
}

.ribbon button:disabled {
   color: #919aa5;
}

.more::after {
   content: "";
   margin-top: auto;
   border: 3px solid transparent;
   border-top-color: #1e395b;
   border-bottom: 0;
}

.toggle {
   display: flex;
   flex-direction: column;
   align-items: center;
   padding-top: 5px;
   gap: 4px;
   line-height: 17px;
}

.sw {
   width: 66px;
   height: 22px;
   display: flex;
   align-items: center;
   background: #f1f5fa;
   border: 1px solid #aab7c8;
   border-radius: 2px;
   margin-left: 6px;
   color: #657285;
}

.sw input {
   appearance: none;
   width: 28px;
   height: 20px;
   margin: 0 7px 0 0;
   background: linear-gradient(90deg, #bcc7d4, #dce3eb);
   border-right: 1px solid #8f9eae;
}

.sw b {
   font: bold 11px/16px "Liberation Mono", monospace;
}

/* grouped panels */
.info {
   flex: none;
   height: 130px;
   padding-left: 2px;
   border: 1px solid #5b6e84;
   border-right: 0;
   background: #edf4fd;
}

.group-line {
   height: 21px;
   margin-left: -2px;
   display: flex;
   justify-content: center;
   background: linear-gradient(#5b6e84, #5b6e84) 0 9px / 100% 1px no-repeat;
}

.group-line h2 {
   margin: 0;
   height: 20px;
   padding: 0 7px;
   font-size: 12px;
   font-weight: normal;
   line-height: 15px;
   color: #253c7d;
   background: linear-gradient(#edf4fd, #d9e5f4);
   border: 1px solid #5b6e84;
   border-top: 0;
   border-radius: 0 0 3px 3px;
   white-space: nowrap;
}

.info .group-line {
   padding-left: 375px;
}

.code {
   font-family: "Liberation Mono", monospace;
   font-size: 10px;
}

table {
   table-layout: fixed;
   border-collapse: separate;
   border-spacing: 0;
   color: #000;
}

.w34 { width: 34px; }
.w35 { width: 35px; }
.w40 { width: 40px; }
.w44 { width: 44px; }
.w55 { width: 55px; }
.w60 { width: 60px; }
.w63 { width: 63px; }
.w64 { width: 64px; }
.w70 { width: 70px; }
.w71 { width: 71px; }
.w75 { width: 75px; }
.w80 { width: 80px; }
.w94 { width: 94px; }
.w98 { width: 98px; }
.w112 { width: 112px; }
.w120 { width: 120px; }
.w155 { width: 155px; }

.info-table {
   height: 87px;
   overflow: hidden;
   background: #fff;
}

.info-table table {
   width: 995px;
}

.info-table th,
.params th {
   height: 33px;
   padding: 0 0 3px;
   font: 12px/16px "Noto Sans CJK SC", sans-serif;
   border: 1px solid #8fa9ca;
   border-left: 0;
   background: linear-gradient(#f3f7fd, #dfeaf7);
   white-space: nowrap;
}

.info-table td {
   height: 22px;
   padding: 0 0 2px 1px;
   background: #afd2f7;
   border-right: 1px solid #c6dcf5;
   border-bottom: 1px solid #c6dcf5;
   white-space: nowrap;
}

.info-table .mark {
   padding-left: 3px;
   background: #c9cdd3;
}

.mark::after {
   content: "";
   display: block;
   width: 0;
   border: 4px solid transparent;
   border-left-color: #000;
   border-right: 0;
}

.corner::after {
   content: "";
   display: block;
   margin: 14px 2px 0 auto;
   width: 11px;
   height: 11px;
   background: linear-gradient(135deg, transparent 50%, #397acb 50%);
}

.hscroll {
   height: 17px;
   display: flex;
   align-items: center;
   gap: 7px;
   padding-left: 7px;
   background: #f6f7f8;
   border-bottom: 1px solid #8fa9ca;
}

.tri-left {
   border: 4px solid transparent;
   border-right-color: #41526b;
   border-left: 0;
}

.hthumb {
   flex: 1;
   height: 15px;
   margin-right: 49px;
   display: flex;
   align-items: center;
   justify-content: center;
   gap: 1px;
   background: linear-gradient(#f4f5f7, #e3e7ec);
   border: 1px solid #8d949d;
}

.hthumb i {
   width: 1px;
   height: 9px;
   background: #777;
}

.hsplit {
   flex: none;
   height: 5px;
   padding-left: 376px;
   display: flex;
   align-items: center;
   justify-content: center;
   gap: 12px;
   background: linear-gradient(#cbd5dd, #77838f);
}

.tri-down {
   border: 4px solid transparent;
   border-top-color: #2d4871;
   border-bottom: 0;
}

.dots {
   width: 35px;
   height: 2px;
   background: repeating-linear-gradient(90deg, #2d4871 0 2px, #dfe7f0 2px 4px);
}

.lower {
   flex: 1;
   min-height: 0;
   display: flex;
}

.flow {
   flex: none;
   width: 674px;
   display: flex;
   flex-direction: column;
   border: 1px solid #7188a8;
   border-width: 0 1px;
   background: #edf4fd;
}

.flow-body {
   flex: 1;
   min-height: 0;
   display: flex;
   padding: 1px 4px 0 3px;
}

.device {
   flex: none;
   width: 217px;
   padding: 3px 2px 0 1px;
   display: flex;
   align-items: flex-start;
   background: linear-gradient(90deg, #cfe0fb, #f3f8ff 20px, #3f66a5 20px, #3f66a5 21px, #8bb0e8 21px, #8bb0e8 30%, #e0ecff);
   border: 1px solid #3f66a5;
   border-width: 1px 1px 0 0;
}

.side-tab {
   flex: none;
   width: 20px;
   height: 90px;
   margin-right: 5px;
   display: grid;
   font-weight: bold;
   font-size: 13px;
   color: #000;
}

.side-tab svg,
.side-tab span {
   grid-area: 1 / 1;
}

.side-tab span {
   padding: 11px 0 0 2px;
   writing-mode: vertical-rl;
   text-orientation: sideways;
   text-align: left;
}

.device-body {
   flex: 1;
   min-width: 0;
   padding-top: 3px;
}

.device-head {
   height: 35px;
   padding: 0 5px 2px 14px;
   display: flex;
   align-items: center;
   justify-content: space-between;
   color: #34465e;
   background: #f3f4f7;
   white-space: nowrap;
}

.device-area {
   height: 278px;
   background: #c9e9cc;
   border: 1px solid #8da2bd;
}

.vsplit {
   flex: none;
   width: 5px;
   padding-top: 18px;
   display: flex;
   flex-direction: column;
   align-items: center;
   justify-content: center;
   gap: 12px;
   background: linear-gradient(90deg, #c9d5df, #74879b);
}

.vsplit.wide {
   width: 7px;
   padding-top: 20px;
}

.vdots {
   width: 2px;
   height: 35px;
   background: repeating-linear-gradient(#2d4871 0 2px, #dfe7f0 2px 4px);
}

.tree {
   position: relative;
   flex: 1;
   min-width: 0;
   display: flex;
}

.tree-view {
   flex: 1;
   min-width: 0;
   display: flex;
   flex-direction: column;
}

.tree-head {
   flex: none;
   height: 19px;
   display: grid;
   grid-template-columns: 155px 55px 75px 75px 1fr;
   line-height: 16px;
   color: #000;
   background: linear-gradient(#f4f8fe, #dce8f7);
   border: 1px solid #93addd;
   border-width: 1px 0;
}

.tree-head span {
   padding-left: 7px;
   border-right: 1px solid #93addd;
   white-space: nowrap;
}

.tree-head span:first-child {
   padding-left: 0;
}

.tree-clip {
   flex: 1;
   min-height: 0;
   display: flex;
   align-items: flex-start;
   overflow: hidden;
   background: #c9e9cc;
}

.tree table {
   width: 100%;
   margin-top: -13px;
}

.tree td {
   height: 19px;
   padding: 0 0 0 6px;
   line-height: 17px;
   white-space: nowrap;
   border-right: 1px solid #d2e8dc;
}

.tree td:first-child {
   padding-left: 20px;
}

.node {
   height: 19px;
   display: flex;
   align-items: center;
   background: repeating-linear-gradient(#333 0 1px, transparent 1px 2px) 4px 0 / 1px 100% no-repeat;
}

.node.last {
   background-size: 1px 10px;
}

.node span {
   padding-left: 5px;
}

.plus,
.minus {
   width: 9px;
   height: 9px;
   border: 1px solid #777;
   background: linear-gradient(#000, #000) center / 5px 1px no-repeat, #fff;
}

.plus {
   background: linear-gradient(#000, #000) center / 5px 1px no-repeat, linear-gradient(#000, #000) center / 1px 5px no-repeat, #fff;
}

.dash {
   width: 5px;
   margin-right: 3px;
   border-top: 1px dotted #333;
}

.elbow {
   align-self: flex-start;
   width: 11px;
   height: 10px;
   margin: 0 3px 0 20px;
   border: 1px dotted #333;
   border-width: 0 0 1px 1px;
}

.elbow ~ span {
   padding-left: 7px;
}

.vscroll {
   flex: none;
   width: 17px;
   padding: 6px 1px 6px;
   display: flex;
   flex-direction: column;
   align-items: center;
   background: #f4f6f8;
   border: 1px solid #93a9cb;
   border-width: 1px 1px 0 0;
}

.tri-up,
.tri-dn {
   border: 4px solid transparent;
   border-bottom: 5px solid #505760;
   border-top: 0;
}

.tri-dn {
   border-top: 5px solid #505760;
   border-bottom: 0;
   margin-top: 16px;
}

.vtrack-top {
   flex: 97;
}

.vthumb {
   flex: 275;
   width: 14px;
   display: flex;
   flex-direction: column;
   align-items: center;
   justify-content: center;
   gap: 1px;
   background: linear-gradient(90deg, #f1f4f8, #dce2e9);
   border: 1px solid #8491a2;
}

.vthumb i {
   width: 9px;
   height: 1px;
   background: #777;
}

.detail {
   flex: 1;
   min-width: 0;
   display: flex;
   flex-direction: column;
   background: #84a8df;
}

.detail-tabs {
   flex: none;
   height: 26px;
   background: linear-gradient(#c6d6ea, #dce8f5);
}

.detail-tabs button {
   width: 68px;
   height: 26px;
   padding-bottom: 3px;
   color: #fff;
   font-weight: bold;
   font-size: 13px;
   border: 1px solid #1a4f9d;
   background: linear-gradient(45deg, #fff 5px, transparent 5px) 33px 19px / 7px 7px no-repeat, linear-gradient(-45deg, #fff 5px, transparent 5px) 26px 19px / 7px 7px no-repeat, linear-gradient(#4a8ae0, #1b60bd);
}

.sub-tabs {
   flex: none;
   height: 24px;
   display: grid;
   grid-template-columns: 100px;
   padding-left: 3px;
   background: linear-gradient(#f3f7fd, #d2e1f5);
   border-bottom: 1px solid #3f66a5;
   color: #000;
   font-size: 13px;
   line-height: 24px;
}

.sub-tabs svg,
.sub-tabs b {
   grid-area: 1 / 1;
}

.sub-tabs b {
   padding-left: 33px;
}

.params {
   flex: 1;
   margin: 5px 0 0 2px;
   overflow: hidden;
   background: #fff;
   color: #000;
}

.params table {
   width: 312px;
}

.params p {
   margin: 174px 0 0;
   padding-left: 98px;
   text-align: center;
   white-space: nowrap;
}
```
